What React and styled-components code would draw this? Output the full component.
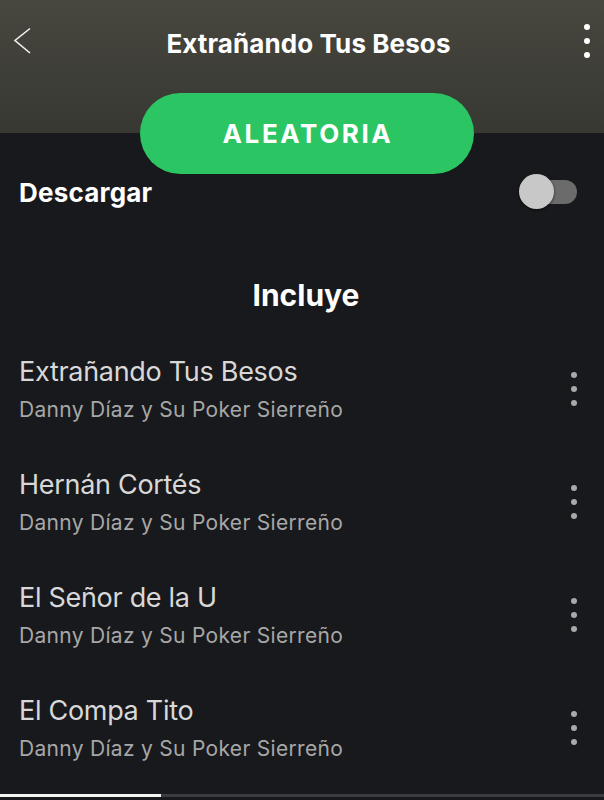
import styled, { createGlobalStyle } from 'styled-components';

const songs = [
  { id: 1, title: 'Extrañando Tus Besos', artist: 'Danny Díaz y Su Poker Sierreño' },
  { id: 2, title: 'Hernán Cortés', artist: 'Danny Díaz y Su Poker Sierreño' },
  { id: 3, title: 'El Señor de la U', artist: 'Danny Díaz y Su Poker Sierreño' },
  { id: 4, title: 'El Compa Tito', artist: 'Danny Díaz y Su Poker Sierreño' },
];

const GlobalStyle = createGlobalStyle`
  html, body {
    margin: 0;
    padding: 0;
    background: #18191c;
  }
  body {
    font-family: Inter, "Liberation Sans", Arial, sans-serif;
    -webkit-font-smoothing: antialiased;
  }
`;

const Kebab = ({ color = '#fff', size = 6 }) => (
  <KebabBox>
    <Dot color={color} size={size} />
    <Dot color={color} size={size} />
    <Dot color={color} size={size} />
  </KebabBox>
);

const App = () => (
  <>
    <GlobalStyle />
    <Page>
      <TopBar>
        <IconButton aria-label="Atrás">
          <svg width="20" height="30" viewBox="0 0 20 30">
            <path d="M17 1.5 L2 13.5 L17 26" fill="none" stroke="#f2f2f2" strokeWidth="1.6" />
          </svg>
        </IconButton>
        <Title>Extrañando Tus Besos</Title>
        <HeaderMenu>
          <Kebab color="#ffffff" size={6} />
        </HeaderMenu>
      </TopBar>

      <ShuffleButton>ALEATORIA</ShuffleButton>

      <DownloadRow>
        <DownloadLabel>Descargar</DownloadLabel>
        <Toggle>
          <Track />
          <Thumb />
        </Toggle>
      </DownloadRow>

      <SectionTitle>Incluye</SectionTitle>

      <SongList>
        {songs.map((song) => (
          <SongRow key={song.id}>
            <SongInfo>
              <SongTitle>{song.title}</SongTitle>
              <SongArtist>{song.artist}</SongArtist>
            </SongInfo>
            <RowMenu>
              <Kebab color="#a9a9a9" size={6} />
            </RowMenu>
          </SongRow>
        ))}
      </SongList>

      <HomeBar>
        <HomeProgress />
      </HomeBar>
    </Page>
  </>
);

const Page = styled.div`
  min-height: 800px;
  background: linear-gradient(180deg, #47473f 0px, #383833 133px, #18191c 133px);
  display: flex;
  flex-direction: column;
`;

const TopBar = styled.header`
  height: 86px;
  display: flex;
  align-items: center;
  justify-content: space-between;
  padding: 0 10px 0 13px;
  box-sizing: border-box;
`;

const IconButton = styled.div`
  width: 24px;
  height: 30px;
  display: flex;
  align-items: center;
  margin-top: -2px;
`;

const Title = styled.h1`
  margin: 0;
  color: #ffffff;
  font-size: 26px;
  font-weight: 700;
  letter-spacing: 0.1px;
`;

const HeaderMenu = styled.div`
  width: 14px;
  display: flex;
  justify-content: center;
  margin-top: -4px;
`;

const KebabBox = styled.div`
  display: flex;
  flex-direction: column;
  align-items: center;
  gap: 8px;
`;

const Dot = styled.span`
  display: block;
  width: ${({ size }) => size}px;
  height: ${({ size }) => size}px;
  border-radius: 50%;
  background: ${({ color }) => color};
`;

const ShuffleButton = styled.button`
  align-self: center;
  margin: 7px 0 0 10px;
  width: 334px;
  height: 81px;
  border: none;
  border-radius: 41px;
  background: #2bc663;
  color: #ffffff;
  font-family: Inter, "Liberation Sans", Arial, sans-serif;
  font-size: 26px;
  font-weight: 700;
  letter-spacing: 2.6px;
  padding: 0 0 0 2px;
`;

const DownloadRow = styled.div`
  height: 36px;
  display: flex;
  align-items: center;
  justify-content: space-between;
  padding: 0 27px 0 19px;
`;

const DownloadLabel = styled.span`
  color: #ffffff;
  font-size: 26px;
  font-weight: 700;
  letter-spacing: 0.2px;
`;

const Toggle = styled.div`
  position: relative;
  width: 58px;
  height: 36px;
  display: flex;
  align-items: center;
  justify-content: flex-end;
`;

const Track = styled.div`
  width: 44px;
  height: 24px;
  border-radius: 12px;
  background: #6b6b6b;
`;

const Thumb = styled.div`
  position: absolute;
  left: 0;
  top: 0;
  width: 35px;
  height: 35px;
  border-radius: 50%;
  background: #c8c8c8;
  box-shadow: 0 1px 3px rgba(0, 0, 0, 0.6);
`;

const SectionTitle = styled.h2`
  margin: 65px 0 0;
  padding-left: 8px;
  height: 40px;
  line-height: 40px;
  text-align: center;
  color: #ffffff;
  font-size: 30px;
  font-weight: 700;
  letter-spacing: 0;
`;

const SongList = styled.ul`
  list-style: none;
  margin: 39px 0 0;
  padding: 0;
`;

const SongRow = styled.li`
  height: 113px;
  display: flex;
  align-items: flex-start;
  justify-content: space-between;
  padding: 0 27px 0 19px;
  box-sizing: border-box;
`;

const SongInfo = styled.div`
  display: flex;
  flex-direction: column;
  gap: 6px;
`;

const SongTitle = styled.span`
  color: #d8d8d8;
  font-size: 27px;
  line-height: 36px;
  font-weight: 400;
  letter-spacing: -0.3px;
`;

const SongArtist = styled.span`
  color: #a7a7a7;
  font-size: 21px;
  line-height: 28px;
  letter-spacing: 0.3px;
`;

const RowMenu = styled.div`
  height: 70px;
  display: flex;
  align-items: center;
`;

const HomeBar = styled.div`
  position: fixed;
  left: 0;
  right: 0;
  bottom: 3px;
  height: 3px;
  background: #3b3c3f;
`;

const HomeProgress = styled.div`
  width: 161px;
  height: 100%;
  background: #f4f4f4;
`;

export default App;
